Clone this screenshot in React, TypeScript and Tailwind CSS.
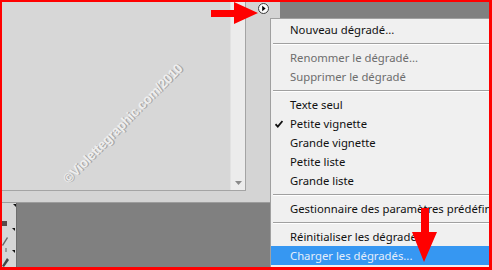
import React from 'react';

type Item =
  | { kind: 'sep' }
  | { kind: 'item'; label: string; disabled?: boolean; checked?: boolean; active?: boolean };

const menu: Item[] = [
  { kind: 'item', label: 'Nouveau dégradé...' },
  { kind: 'sep' },
  { kind: 'item', label: 'Renommer le dégradé...', disabled: true },
  { kind: 'item', label: 'Supprimer le dégradé', disabled: true },
  { kind: 'sep' },
  { kind: 'item', label: 'Texte seul' },
  { kind: 'item', label: 'Petite vignette', checked: true },
  { kind: 'item', label: 'Grande vignette' },
  { kind: 'item', label: 'Petite liste' },
  { kind: 'item', label: 'Grande liste' },
  { kind: 'sep' },
  { kind: 'item', label: 'Gestionnaire des paramètres prédéfinis...' },
  { kind: 'sep' },
  { kind: 'item', label: 'Réinitialiser les dégradés...' },
  { kind: 'item', label: 'Charger les dégradés...', active: true },
];

function MenuRow({ item }: { item: Item }) {
  if (item.kind === 'sep') {
    return (
      <div className="flex h-[9px] items-center pl-[2px]">
        <div className="w-full border-t border-b border-t-[#a0a0a0] border-b-white" />
      </div>
    );
  }
  const color = item.active ? 'bg-[#3697f2] text-[#e4eefa]' : item.disabled ? 'text-[#6d6d6d]' : 'text-[#111111]';
  return (
    <div className={`flex h-[19px] items-center whitespace-nowrap ${color}`}>
      <span className="flex w-[19px] shrink-0 pl-[4px]">
        {item.checked && (
          <svg width="8" height="8" viewBox="0 0 8 8">
            <path d="M0.5 4.2 L2.8 6.6 L7.5 1" fill="none" stroke="#111" strokeWidth="1.8" />
          </svg>
        )}
      </span>
      <span>{item.label}</span>
    </div>
  );
}

export default function App() {
  return (
    <div
      className="relative h-[270px] w-[492px] overflow-hidden bg-[#ff0000] pb-[3px] pl-[2px] pr-[3px] pt-[2px]"
      style={{ fontFamily: '"Noto Sans", "Open Sans", sans-serif' }}
    >
      <div className="relative flex h-full w-full overflow-hidden bg-[#808080]">
        {/* panel */}
        <div className="flex w-[278px] flex-col">
          <div className="flex h-[201px] border-b border-[#9c9c9c] bg-[#d4d4d4]">
            <div className="relative flex h-[189px] w-[244px] overflow-hidden border-b border-r border-[#a4a4a4] bg-[#d7d7d7]">
              <div className="flex-1" />
              <div className="flex w-[15px] flex-col items-center justify-end border-l border-[#e2e2e2] bg-[#ececec] pb-[5px]">
                <svg width="7" height="4" viewBox="0 0 7 4">
                  <path d="M0 0 H7 L3.5 4 Z" fill="#8a8a8a" />
                </svg>
              </div>
              <div className="absolute left-[121px] top-[122px] -translate-x-1/2 -translate-y-1/2 rotate-[-45deg] whitespace-nowrap font-['Liberation_Sans'] text-[13.3px] font-bold tracking-[-0.3px] text-[#eeeeee] [text-shadow:1px_1px_0_#a6a6a6]">
                ©Violettegraphic.com/2010
              </div>
            </div>
            <div className="flex flex-1 justify-center pt-[1px]">
              <svg width="11" height="11" viewBox="0 0 11 11">
                <circle cx="5.5" cy="5.5" r="5" fill="#fafafa" stroke="#3a3a3a" strokeWidth="1" />
                <path d="M4.2 2.8 L7.6 5.5 L4.2 8.2 Z" fill="#000" />
              </svg>
            </div>
          </div>
          <div className="flex flex-1">
            <div className="w-[15px] border-r border-[#6e6e6e] bg-[#d6d6d6]">
              <svg width="15" height="64" viewBox="0 0 15 64">
                <path d="M11 1 L14 1 L14 4 Z" fill="#111" />
                <rect x="0" y="18" width="5" height="5" fill="#5a4a4a" />
                <path d="M10 25 L13 25 L13 28 Z" fill="#111" />
                <path d="M0 42 L5 34 L6 35 L1 43 Z" fill="#666" />
                <circle cx="4" cy="46" r="0.7" fill="#333" />
                <circle cx="4" cy="48" r="0.7" fill="#333" />
                <path d="M10 47 L13 47 L13 50 Z" fill="#111" />
                <path d="M0 63 L5 55 L7 57 L2 64 Z" fill="#444" />
              </svg>
            </div>
            <div className="flex-1" />
          </div>
        </div>
        <div className="flex-1" />

        {/* popup menu */}
        <div className="absolute bottom-0 left-[268px] right-0 top-[16px] overflow-hidden border-l border-t border-[#a0a0a0] bg-[#f0f0f0] pt-[1px] text-[11.3px] leading-none">
          {menu.map((item, i) => (
            <MenuRow key={i} item={item} />
          ))}
        </div>
      </div>

      {/* red arrows */}
      <svg className="absolute left-0 top-0" width="492" height="270" viewBox="0 0 492 270">
        <path d="M211 10 H234 V2 L258 13 L234 24 V17 H211 Z" fill="#ff0000" />
        <path d="M421 208 H429 V232 H437 L424 262 L412 232 H421 Z" fill="#ff0000" />
      </svg>
    </div>
  );
}
